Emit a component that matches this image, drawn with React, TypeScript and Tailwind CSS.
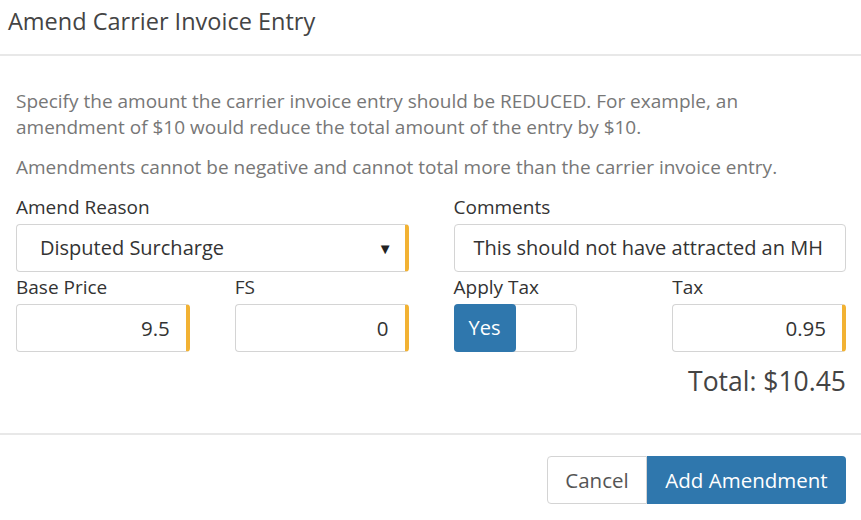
import { useState } from "react";

const Field = ({ label, children }: { label: string; children: React.ReactNode }) => (
  <div className="flex flex-col">
    <label className="text-[19px] leading-[22px] text-[#333] mb-[6px] whitespace-nowrap">{label}</label>
    {children}
  </div>
);

const NumberBox = ({ value }: { value: string }) => (
  <div className="h-[48px] rounded-[4px] border border-[#d4d4d4] border-r-[4px] border-r-[#f2b233] flex items-center justify-end pr-[16px] text-[20.5px] text-[#333]">
    {value}
  </div>
);

const App = () => {
  const [applyTax, setApplyTax] = useState(true);

  return (
    <div className="w-[861px] h-[520px] bg-white font-['Open_Sans',sans-serif] text-[#333]">
      {/* header */}
      <div className="h-[56px] border-b-2 border-[#e8e8e8] flex items-center px-[8px] pb-[10px]">
        <h1 className="text-[23.5px] text-[#444]">Amend Carrier Invoice Entry</h1>
      </div>

      {/* body */}
      <div className="pl-[16px] pr-[15px] pt-[32px]">
        <p className="text-[19px] leading-[26px] text-[#777] whitespace-nowrap">
          Specify the amount the carrier invoice entry should be REDUCED. For example, an
          <br />
          amendment of $10 would reduce the total amount of the entry by $10.
        </p>
        <p className="text-[19px] leading-[26px] text-[#777] mt-[14px] whitespace-nowrap">
          Amendments cannot be negative and cannot total more than the carrier invoice entry.
        </p>

        <div className="grid grid-cols-2 gap-x-[45px] mt-[16px]">
          <Field label="Amend Reason">
            <div className="h-[48px] rounded-[4px] border border-[#d4d4d4] border-r-[4px] border-r-[#f2b233] flex items-center justify-between pl-[23px] pr-[12px] text-[20px]">
              <span>Disputed Surcharge</span>
              <span className="text-[15px] text-[#222]">▼</span>
            </div>
          </Field>
          <Field label="Comments">
            <div className="h-[48px] rounded-[4px] border border-[#d4d4d4] flex items-center pl-[19px] text-[20px] overflow-hidden whitespace-nowrap">
              This should not have attracted an MH
            </div>
          </Field>
        </div>

        <div className="grid grid-cols-2 gap-x-[45px] mt-[4px]">
          <div className="grid grid-cols-2 gap-x-[45px]">
            <Field label="Base Price">
              <NumberBox value="9.5" />
            </Field>
            <Field label="FS">
              <NumberBox value="0" />
            </Field>
          </div>
          <div className="grid grid-cols-2 gap-x-[45px]">
            <Field label="Apply Tax">
              <button
                onClick={() => setApplyTax(!applyTax)}
                className="h-[48px] w-[123px] rounded-[4px] border border-[#d4d4d4] flex items-stretch p-0 bg-white"
              >
                {applyTax ? (
                  <span className="w-[62px] bg-[#2f77ad] text-white text-[20px] font-medium rounded-[4px] flex items-center justify-center -m-px">
                    Yes
                  </span>
                ) : (
                  <span className="ml-auto w-[62px] bg-[#eee] text-[#333] text-[20px] font-medium rounded-[4px] flex items-center justify-center">
                    No
                  </span>
                )}
              </button>
            </Field>
            <Field label="Tax">
              <NumberBox value="0.95" />
            </Field>
          </div>
        </div>

        <div className="flex justify-end mt-[14px] text-[26.5px] leading-[30px] text-[#444]">
          Total: $10.45
        </div>
      </div>

      {/* footer */}
      <div className="mt-[37px] border-t-2 border-[#e8e8e8] pl-[16px] pr-[15px] pt-[21px] flex justify-end">
        <div className="flex">
          <button className="h-[48px] w-[100px] rounded-l-[4px] border border-[#d4d4d4] bg-white text-[20.5px] text-[#555]">
            Cancel
          </button>
          <button className="h-[48px] w-[199px] rounded-r-[4px] bg-[#2f77ad] text-[20.5px] text-white">
            Add Amendment
          </button>
        </div>
      </div>
    </div>
  );
};

export default App;
